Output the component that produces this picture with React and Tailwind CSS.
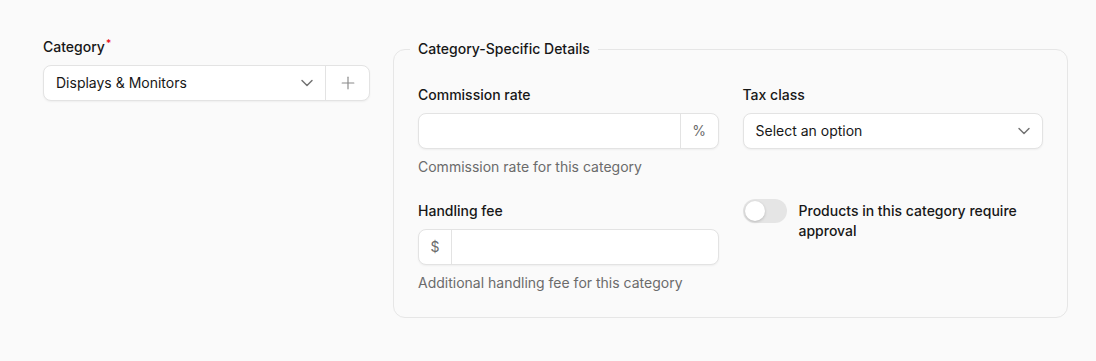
import { ChevronDown, Plus } from "lucide-react";

const font = { fontFamily: "Inter, 'Noto Sans', sans-serif" };

function Label({ children, required }) {
  return (
    <label className="block text-sm leading-5 font-medium text-[#171717] mb-2">
      {children}
      {required && <sup className="text-red-600 text-[10px] ml-px">*</sup>}
    </label>
  );
}

function Help({ children }) {
  return <p className="mt-2 text-sm leading-5 text-[#6b6b6b]">{children}</p>;
}

export default function App() {
  return (
    <div
      style={font}
      className="min-h-screen w-full bg-[#fafafa] pl-[43px] pt-[37px] flex gap-[23px] items-start"
    >
      {/* Category */}
      <div className="w-[327px]">
        <Label required>Category</Label>
        <div className="flex h-9 bg-white border border-[#e3e3e3] rounded-lg shadow-[0_1px_2px_rgba(0,0,0,0.05)]">
          <div className="flex-1 flex items-center justify-between pl-3 pr-2 text-sm text-[#171717]">
            <span>Displays &amp; Monitors</span>
            <ChevronDown size={20} strokeWidth={1.75} className="text-[#737373]" />
          </div>
          <button className="w-11 flex items-center justify-center border-l border-[#e3e3e3] text-[#8a8a8a]">
            <Plus size={20} strokeWidth={1.4} />
          </button>
        </div>
      </div>

      {/* Category-specific details */}
      <fieldset className="w-[675px] border border-[#e6e6e6] rounded-xl px-6 pb-6 pt-[26px] mt-[2px]">
        <legend className="-ml-2 px-2 text-sm leading-5 font-medium text-[#171717]">
          Category-Specific Details
        </legend>
        <div className="grid grid-cols-2 gap-x-6 gap-y-6">
          <div>
            <Label>Commission rate</Label>
            <div className="flex h-9 bg-white border border-[#e3e3e3] rounded-lg shadow-[0_1px_2px_rgba(0,0,0,0.05)]">
              <input className="flex-1 min-w-0 px-3 text-sm outline-none bg-transparent" />
              <span className="w-[38px] flex items-center justify-center border-l border-[#e3e3e3] text-sm text-[#6b6b6b]">
                %
              </span>
            </div>
            <Help>Commission rate for this category</Help>
          </div>
          <div>
            <Label>Tax class</Label>
            <div className="flex h-9 items-center justify-between bg-white border border-[#e3e3e3] rounded-lg pl-3 pr-2 shadow-[0_1px_2px_rgba(0,0,0,0.05)]">
              <span className="text-sm text-[#171717]">Select an option</span>
              <ChevronDown size={20} strokeWidth={1.75} className="text-[#737373]" />
            </div>
          </div>
          <div>
            <Label>Handling fee</Label>
            <div className="flex h-9 bg-white border border-[#e3e3e3] rounded-lg shadow-[0_1px_2px_rgba(0,0,0,0.05)]">
              <span className="w-[33px] flex items-center justify-center border-r border-[#e3e3e3] text-sm text-[#6b6b6b]">
                $
              </span>
              <input className="flex-1 min-w-0 px-3 text-sm outline-none bg-transparent" />
            </div>
            <Help>Additional handling fee for this category</Help>
          </div>
          <div className="flex items-start gap-3">
            <div className="mt-[-2px] w-11 h-6 shrink-0 rounded-full bg-[#e5e5e5] p-0.5">
              <div className="w-5 h-5 rounded-full bg-white shadow-[0_1px_3px_rgba(0,0,0,0.2)]" />
            </div>
            <span className="text-sm leading-5 font-medium text-[#171717] pr-6">
              Products in this category require approval
            </span>
          </div>
        </div>
      </fieldset>
    </div>
  );
}
